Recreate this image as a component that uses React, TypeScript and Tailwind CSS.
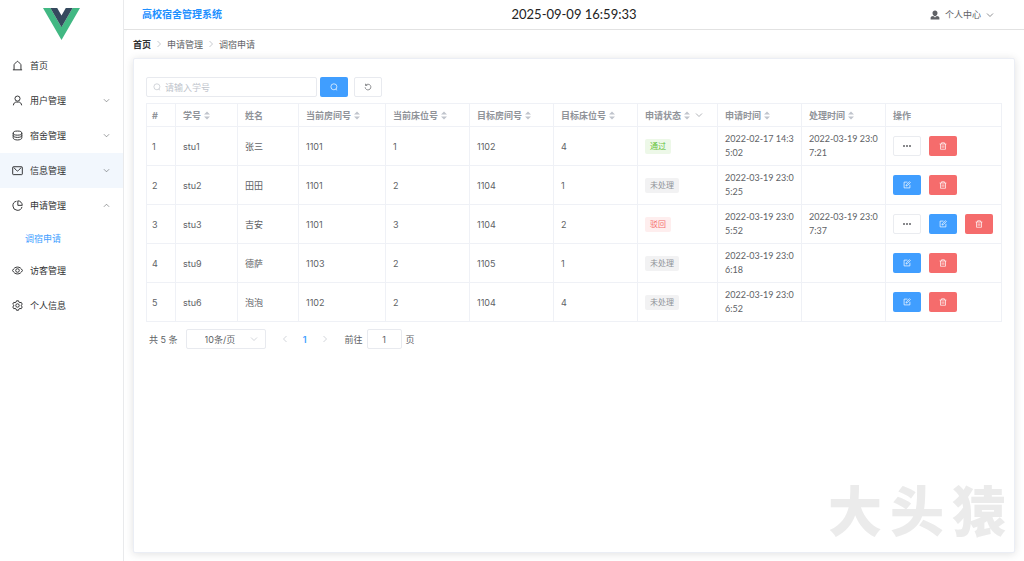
import React from "react";

const icons = {
  home: (
    <>
      <path d="M3 14.3V7.2C3 6.600 3.300 6.200 3.800 5.700L7 2.400c.6-.6 1.400-.6 2 0l3.200 3.300c.5.5.8.9.8 1.500v7.100" />
      <path d="M1.300 14.300h13.400" />
    </>
  ),
  user: (
    <>
      <circle cx="8" cy="5.200" r="3.700" />
      <path d="M2 15c.3-3 2-4.700 4.400-4.700h3.200c2.400 0 4.100 1.700 4.400 4.700" />
    </>
  ),
  coin: (
    <>
      <ellipse cx="8" cy="4.500" rx="6.300" ry="3" />
      <path d="M1.700 4.500v7c0 1.700 2.800 3 6.300 3s6.300-1.300 6.300-3v-7M1.700 8c0 1.600 2.800 2.800 6.300 2.800S14.300 9.600 14.300 8" />
    </>
  ),
  message: (
    <>
      <rect x="1" y="2.500" width="14" height="11.500" rx="1" />
      <path d="M2.500 3.500 6.800 8.200c.8.8 1.600.8 2.400 0l4.300-4.700" />
    </>
  ),
  pie: (
    <>
      <path d="M6.500 1.800A6.700 6.700 0 1 0 14.500 10" />
      <path d="M8.500 1.200v6.600h6.400a6.500 6.500 0 0 0-6.400-6.600z" />
    </>
  ),
  view: (
    <>
      <path d="M.8 8C2.500 4.700 5 3 8 3s5.500 1.700 7.200 5c-1.700 3.300-4.200 5-7.200 5S2.500 11.300.8 8z" />
      <circle cx="8" cy="8" r="2.600" />
    </>
  ),
  setting: (
    <>
      <path d="M6.500 1.200h3l.6 1.900 1.300.8 2-.5 1.500 2.600-1.400 1.400v1.300l1.400 1.400-1.500 2.600-2-.5-1.300.8-.6 1.900h-3l-.6-1.900-1.300-.8-2 .5-1.500-2.600 1.400-1.400V7.400L1.100 6l1.500-2.600 2 .5 1.300-.8z" />
      <circle cx="8" cy="8" r="2.500" />
    </>
  ),
  search: (
    <>
      <circle cx="7.800" cy="7.600" r="6" />
      <path d="m11.500 12.200 2.800 2.500" />
    </>
  ),
  refresh: (
    <>
      <path d="M3.500 4.600A5.700 5.700 0 1 1 2.300 8.500" />
      <path d="M3 1.500v3.400h3.500" />
    </>
  ),
  edit: (
    <>
      <path d="M9 2.200H2.200v11.600h11.600V7.500" />
      <path d="m6 10 .5-2.300L13 1.400l1.700 1.700-6.400 6.400z" />
    </>
  ),
  trash: (
    <>
      <path d="M1.200 4h13.600M5.200 4V1.500h5.600V4M3 4v10.500h10V4M6.300 6.800v4.800M9.700 6.800v4.800" />
    </>
  ),
  down: <path d="m2 5 6 6 6-6" />,
  up: <path d="m2 11 6-6 6 6" />,
  left: <path d="m11 2-6 6 6 6" />,
  right: <path d="m5 2 6 6-6 6" />,
};

type IconName = keyof typeof icons;

function Icon({ name, className }: { name: IconName; className: string }) {
  return (
    <svg viewBox="0 0 16 16" fill="none" stroke="currentColor" strokeWidth="1.4" aria-hidden="true" className={`shrink-0 ${className}`}>
      {icons[name]}
    </svg>
  );
}

function SortCaret() {
  return (
    <svg viewBox="0 0 6 9" className="h-[9px] w-[6px] shrink-0 fill-[#c0c4cc]" aria-hidden="true">
      <path d="M0 3.500 3 .5l3 3zM0 5.500h6l-3 3z" />
    </svg>
  );
}

type MenuItem = { icon: IconName; label: string; arrow?: IconName; highlight?: boolean; children?: string[] };

const menu: MenuItem[] = [
  { icon: "home", label: "首页" },
  { icon: "user", label: "用户管理", arrow: "down" },
  { icon: "coin", label: "宿舍管理", arrow: "down" },
  { icon: "message", label: "信息管理", arrow: "down", highlight: true },
  { icon: "pie", label: "申请管理", arrow: "up", children: ["调宿申请"] },
  { icon: "view", label: "访客管理" },
  { icon: "setting", label: "个人信息" },
];

function Sidebar() {
  return (
    <aside className="w-[124px] shrink-0 border-r border-[#e9eaec]">
      <div className="flex h-12 justify-center pt-2">
        <svg viewBox="0 0 37 32" className="h-8 w-[37px]" role="img" aria-label="Vue">
          <path fill="#41b883" d="M0 0h7.400L18.500 19.200 29.600 0H37L18.500 32z" />
          <path fill="#35495e" d="M7.400 0h6.800l4.300 7.500L22.800 0h6.800L18.500 19.200z" />
        </svg>
      </div>
      <nav>
        {menu.map((item) => (
          <div key={item.label}>
            <a
              href="#"
              className={`flex h-[35px] items-center px-3 text-[#303133] ${item.highlight ? "bg-[#f2f7fd]" : ""}`}
            >
              <Icon name={item.icon} className="mr-[7px] h-[11px] w-[11px]" />
              <span className="flex-1">{item.label}</span>
              {item.arrow && <Icon name={item.arrow} className="mr-[1px] h-[7px] w-[7px] text-[#606266]" />}
            </a>
            {item.children?.map((child) => (
              <a key={child} href="#" className="flex h-[30px] items-center pl-[25px] text-[#409eff]">
                {child}
              </a>
            ))}
          </div>
        ))}
      </nav>
    </aside>
  );
}

type Column = { label: string; width: string; sort?: boolean; filter?: boolean };

const columns: Column[] = [
  { label: "#", width: "w-[29px]" },
  { label: "学号", width: "w-[62px]", sort: true },
  { label: "姓名", width: "w-[61px]" },
  { label: "当前房间号", width: "w-[87px]", sort: true },
  { label: "当前床位号", width: "w-[84px]", sort: true },
  { label: "目标房间号", width: "w-[84px]", sort: true },
  { label: "目标床位号", width: "w-[84px]", sort: true },
  { label: "申请状态", width: "w-[80px]", sort: true, filter: true },
  { label: "申请时间", width: "w-[84px]", sort: true },
  { label: "处理时间", width: "w-[84px]", sort: true },
  { label: "操作", width: "" },
];

type Action = "more" | "edit" | "delete";
type Row = { cells: string[]; status: string; applied: string; handled: string; actions: Action[] };

const rows: Row[] = [
  { cells: ["1", "stu1", "张三", "1101", "1", "1102", "4"], status: "通过", applied: "2022-02-17 14:3\n5:02", handled: "2022-03-19 23:0\n7:21", actions: ["more", "delete"] },
  { cells: ["2", "stu2", "田田", "1101", "2", "1104", "1"], status: "未处理", applied: "2022-03-19 23:0\n5:25", handled: "", actions: ["edit", "delete"] },
  { cells: ["3", "stu3", "吉安", "1101", "3", "1104", "2"], status: "驳回", applied: "2022-03-19 23:0\n5:52", handled: "2022-03-19 23:0\n7:37", actions: ["more", "edit", "delete"] },
  { cells: ["4", "stu9", "德萨", "1103", "2", "1105", "1"], status: "未处理", applied: "2022-03-19 23:0\n6:18", handled: "", actions: ["edit", "delete"] },
  { cells: ["5", "stu6", "泡泡", "1102", "2", "1104", "4"], status: "未处理", applied: "2022-03-19 23:0\n6:52", handled: "", actions: ["edit", "delete"] },
];

const statusStyles: Record<string, string> = {
  通过: "bg-[#edf8e8] text-[#67c23a]",
  未处理: "bg-[#f2f2f3] text-[#909399]",
  驳回: "bg-[#feeeee] text-[#f56c6c]",
};

function ActionButton({ action }: { action: Action }) {
  const base = "flex h-5 w-7 items-center justify-center rounded-[2px]";
  if (action === "more")
    return (
      <button type="button" aria-label="更多" className={`${base} border border-[#eaecf0] bg-white text-[#606266]`}>
        <svg viewBox="0 0 8 2" className="h-[2px] w-2 fill-current" aria-hidden="true">
          <circle cx="1" cy="1" r="1" />
          <circle cx="4" cy="1" r="1" />
          <circle cx="7" cy="1" r="1" />
        </svg>
      </button>
    );
  if (action === "edit")
    return (
      <button type="button" aria-label="编辑" className={`${base} bg-[#409eff] text-white`}>
        <Icon name="edit" className="h-2 w-2" />
      </button>
    );
  return (
    <button type="button" aria-label="删除" className={`${base} bg-[#f56c6c] text-white`}>
      <Icon name="trash" className="h-2 w-2" />
    </button>
  );
}

const cell = "border-r border-b border-[#eff1f6] px-[7px] first:pl-[5px]";
const timeCell = `${cell} font-['Lato','Noto_Sans_CJK_SC',sans-serif] leading-[14px] whitespace-pre`;

function ApplyTable() {
  return (
    <table className="w-full table-fixed border-separate border-spacing-0 border-t border-l border-[#eff1f6] text-left text-[#606266]">
      <colgroup>
        {columns.map((c) => (
          <col key={c.label} className={c.width} />
        ))}
      </colgroup>
      <thead>
        <tr>
          {columns.map((c) => (
            <th key={c.label} scope="col" className={`${cell} h-[23px] font-bold whitespace-nowrap text-[#909399]`}>
              <div className="flex items-center gap-[3px]">
                {c.label}
                {c.sort && <SortCaret />}
                {c.filter && <Icon name="down" className="ml-[2px] h-2 w-2" />}
              </div>
            </th>
          ))}
        </tr>
      </thead>
      <tbody>
        {rows.map((r) => (
          <tr key={r.cells[0]}>
            {r.cells.map((value, i) => (
              <td key={i} className={`${cell} h-[39px]`}>
                {value}
              </td>
            ))}
            <td className={cell}>
              <span className={`inline-flex h-[15px] items-center rounded-[2px] px-[5px] text-[8px] ${statusStyles[r.status]}`}>{r.status}</span>
            </td>
            <td className={timeCell}>{r.applied}</td>
            <td className={timeCell}>{r.handled}</td>
            <td className={cell}>
              <div className="flex gap-2">
                {r.actions.map((a) => (
                  <ActionButton key={a} action={a} />
                ))}
              </div>
            </td>
          </tr>
        ))}
      </tbody>
    </table>
  );
}

function Pagination() {
  return (
    <div className="mt-[7px] flex h-5 items-center pl-[3px] text-[#606266]">
      <span>共 5 条</span>
      <div className="relative ml-2">
        <select aria-label="每页条数" className="h-5 w-20 appearance-none rounded-[2px] border border-[#e8eaef] bg-white pl-[18px]">
          <option>10条/页</option>
        </select>
        <Icon name="down" className="pointer-events-none absolute top-[6px] right-2 h-2 w-2 text-[#c0c4cc]" />
      </div>
      <button type="button" aria-label="上一页" className="ml-[15px] text-[#c0c4cc]">
        <Icon name="left" className="h-2 w-2" />
      </button>
      <button type="button" aria-current="page" className="w-8 text-center font-semibold text-[#409eff]">
        1
      </button>
      <button type="button" aria-label="下一页" className="text-[#c0c4cc]">
        <Icon name="right" className="h-2 w-2" />
      </button>
      <label htmlFor="jump" className="ml-4">
        前往
      </label>
      <input id="jump" defaultValue="1" className="mx-1 h-5 w-[35px] rounded-[2px] border border-[#e8eaef] text-center" />
      <span>页</span>
    </div>
  );
}

export default function App() {
  return (
    <div className="flex min-h-screen bg-white font-['Inter','Noto_Sans_CJK_SC',sans-serif] text-[9px] leading-[13px]">
      <Sidebar />
      <div className="flex min-w-0 flex-1 flex-col">
        <header className="flex h-[30px] items-center justify-between border-b border-[#e2e2e2] pr-[30px] pl-[18px]">
          <h1 className="flex-1 text-[10px] font-bold text-[#1e90ff]">高校宿舍管理系统</h1>
          <time className="pl-3 font-['Lato',sans-serif] text-[13px] text-[#222]">2025-09-09 16:59:33</time>
          <div className="flex flex-1 justify-end">
            <button type="button" className="flex items-center text-[#606266]">
              <svg viewBox="0 0 16 16" className="mr-[5px] h-[10px] w-[10px] fill-current" aria-hidden="true">
                <path d="M8 .7c2.400 0 4 1.700 4 4.100 0 1.900-1 3.700-2.300 4.300L8 10.400 6.300 9.100C5 8.500 4 6.700 4 4.800 4 2.400 5.600.7 8 .7zM1 15v-2.200c0-1.400.8-2.200 2.200-2.700l2-.6L8 12l2.800-2.500 2 .6c1.400.5 2.200 1.300 2.200 2.700V15z" />
              </svg>
              个人中心
              <Icon name="down" className="ml-[5px] h-2 w-2" />
            </button>
          </div>
        </header>
        <nav aria-label="面包屑" className="flex h-7 items-center gap-1 px-[9px] text-[#606266]">
          <a href="#" className="font-bold text-[#303133]">
            首页
          </a>
          <Icon name="right" className="h-2 w-2 text-[#b0b4bc]" />
          <span>申请管理</span>
          <Icon name="right" className="h-2 w-2 text-[#b0b4bc]" />
          <span>调宿申请</span>
        </nav>
        <main className="relative mx-[9px] mb-2 flex-1 rounded-[2px] border border-[#ebeef5] bg-white px-3 pt-[18px] shadow-[0_1px_8px_rgba(0,0,0,0.12)]">
          <form className="mb-[6px] flex h-5">
            <div className="relative mr-[3px]">
              <Icon name="search" className="absolute top-[6px] left-[7px] h-2 w-2 text-[#c0c4cc]" />
              <input aria-label="学号" placeholder="请输入学号" className="h-5 w-[171px] rounded-[2px] border border-[#e8eaef] pl-[18px] placeholder:text-[#c0c4cc]" />
            </div>
            <button type="button" aria-label="搜索" className="mr-[6px] flex w-7 items-center justify-center rounded-[2px] bg-[#409eff] text-white">
              <Icon name="search" className="h-2 w-2" />
            </button>
            <button type="button" aria-label="重置" className="flex w-7 items-center justify-center rounded-[2px] border border-[#e8eaef] text-[#606266]">
              <Icon name="refresh" className="h-2 w-2" />
            </button>
          </form>
          <ApplyTable />
          <Pagination />
          <div className="pointer-events-none absolute right-[8px] bottom-[12px] flex gap-2 text-[54px] leading-[54px] font-black text-[#ebebeb]">
            <span>大</span>
            <span>头</span>
            <span>猿</span>
          </div>
        </main>
      </div>
    </div>
  );
}
